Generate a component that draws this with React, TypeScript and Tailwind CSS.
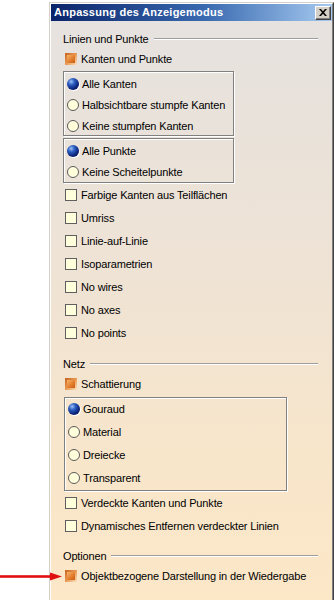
import React from "react";

function Check() {
  return <span className="w-[12px] h-[12px] shrink-0 border border-[#5f5f5f] bg-[#ffffdc]" />;
}

function OrangeCheck() {
  return (
    <span className="w-[12px] h-[12px] shrink-0 p-[2px] flex bg-[linear-gradient(135deg,#c4621e,#e89a55_50%,#fbe3c2)]">
      <span className="flex-1 bg-[linear-gradient(135deg,#f8b56a,#e07a2a_60%,#c95e14)]" />
    </span>
  );
}

function Radio({ on }: { on?: boolean }) {
  if (on)
    return (
      <span className="w-[12px] h-[12px] shrink-0 rounded-full bg-[radial-gradient(circle_at_35%_30%,#9cc0f4_0%,#2a5cc0_30%,#0b2378_65%,#040f48_100%)] shadow-[1px_1px_0_#ffffff]" />
    );
  return <span className="w-[12px] h-[12px] shrink-0 rounded-full border border-[#5a5a5a] bg-[#ffffdc]" />;
}

function Header({ label, className = "" }: { label: string; className?: string }) {
  return (
    <div className={`flex items-center h-[16px] gap-[5px] pr-[14px] ${className}`}>
      <span className="whitespace-nowrap">{label}</span>
      <div className="flex-1 h-[2px] border-t border-t-[#9d9d9d] border-b border-b-white" />
    </div>
  );
}

function CheckRow({ label, orange, className = "" }: { label: string; orange?: boolean; className?: string }) {
  return (
    <div className={`flex items-center h-[16px] pl-[2px] gap-[4px] ${className}`}>
      {orange ? <OrangeCheck /> : <Check />}
      <span className="whitespace-nowrap">{label}</span>
    </div>
  );
}

function RadioRow({ label, on }: { label: string; on?: boolean }) {
  return (
    <div className="flex items-center h-[16px] gap-[3px]">
      <Radio on={on} />
      <span className="whitespace-nowrap">{label}</span>
    </div>
  );
}

export default function App() {
  return (
    <div className="relative w-[334px] h-[600px] bg-white overflow-hidden flex font-['Liberation_Sans',Arial,sans-serif] text-[11px] tracking-[-0.15px] text-black">
      <div className="mt-[2px] ml-[49px] w-[285px] h-[598px] flex border-t border-l border-[#d4d0c8] border-r border-r-[#404040]">
        <div className="flex-1 flex flex-col border-t border-l border-white border-r border-r-[#808080]">
          {/* Title bar */}
          <div className="h-[17px] shrink-0 flex items-center justify-between pl-[3px] pr-[1px] bg-[linear-gradient(90deg,#0a246a,#3a6ab0_55%,#a6caf0)]">
            <span className="text-white font-bold tracking-[0.25px] whitespace-nowrap">Anpassung des Anzeigemodus</span>
            <div className="w-[16px] h-[14px] bg-[#d4d0c8] border-t border-l border-white border-r border-b border-r-[#404040] border-b-[#404040] shadow-[inset_-1px_-1px_0_#808080] flex items-center justify-center">
              <svg width="8" height="7" viewBox="0 0 8 7">
                <path d="M0 0h2l2 2.2L6 0h2L5 3.5 8 7H6L4 4.8 2 7H0l3-3.5z" fill="#000" />
              </svg>
            </div>
          </div>
          {/* Body */}
          <div className="flex-1 flex flex-col pt-[10px] pl-[12px] bg-[linear-gradient(180deg,#e6e2df_0%,#efe3d4_45%,#f8e6cb_75%,#fce7c7_100%)]">
            <Header label="Linien und Punkte" />
            <CheckRow label="Kanten und Punkte" orange className="mt-[4px]" />
            <div className="mt-[4px] w-[171px] h-[65px] shrink-0 border border-[#808080] shadow-[inset_1px_1px_0_#ffffff,1px_1px_0_#ffffff] pt-[4px] pl-[3px] flex flex-col gap-[5px]">
              <RadioRow label="Alle Kanten" on />
              <RadioRow label="Halbsichtbare stumpfe Kanten" />
              <RadioRow label="Keine stumpfen Kanten" />
            </div>
            <div className="mt-[2px] w-[171px] h-[45px] shrink-0 border border-[#808080] shadow-[inset_1px_1px_0_#ffffff,1px_1px_0_#ffffff] pt-[4px] pl-[3px] flex flex-col gap-[5px]">
              <RadioRow label="Alle Punkte" on />
              <RadioRow label="Keine Scheitelpunkte" />
            </div>
            <div className="mt-[4px] flex flex-col gap-[7px]">
              <CheckRow label="Farbige Kanten aus Teilflächen" />
              <CheckRow label="Umriss" />
              <CheckRow label="Linie-auf-Linie" />
              <CheckRow label="Isoparametrien" />
              <CheckRow label="No wires" />
              <CheckRow label="No axes" />
              <CheckRow label="No points" />
            </div>
            <Header label="Netz" className="mt-[15px]" />
            <CheckRow label="Schattierung" orange className="mt-[4px]" />
            <div className="mt-[5px] ml-[1px] w-[223px] h-[94px] shrink-0 border border-[#808080] shadow-[inset_1px_1px_0_#ffffff,1px_1px_0_#ffffff] pt-[3px] pl-[3px] flex flex-col gap-[7px]">
              <RadioRow label="Gouraud" on />
              <RadioRow label="Material" />
              <RadioRow label="Dreiecke" />
              <RadioRow label="Transparent" />
            </div>
            <div className="mt-[4px] flex flex-col gap-[7px]">
              <CheckRow label="Verdeckte Kanten und Punkte" />
              <CheckRow label="Dynamisches Entfernen verdeckter Linien" />
            </div>
            <Header label="Optionen" className="mt-[14px]" />
            <CheckRow label="Objektbezogene Darstellung in der Wiedergabe" orange className="mt-[4px]" />
          </div>
        </div>
      </div>
      {/* Red annotation arrow */}
      <svg className="absolute left-0 top-[571px] z-10" width="64" height="11" viewBox="0 0 64 11">
        <rect x="0" y="4.2" width="52" height="2.6" fill="#e01010" />
        <polygon points="50,1.5 62,5.5 50,9.5" fill="#e01010" />
      </svg>
    </div>
  );
}
